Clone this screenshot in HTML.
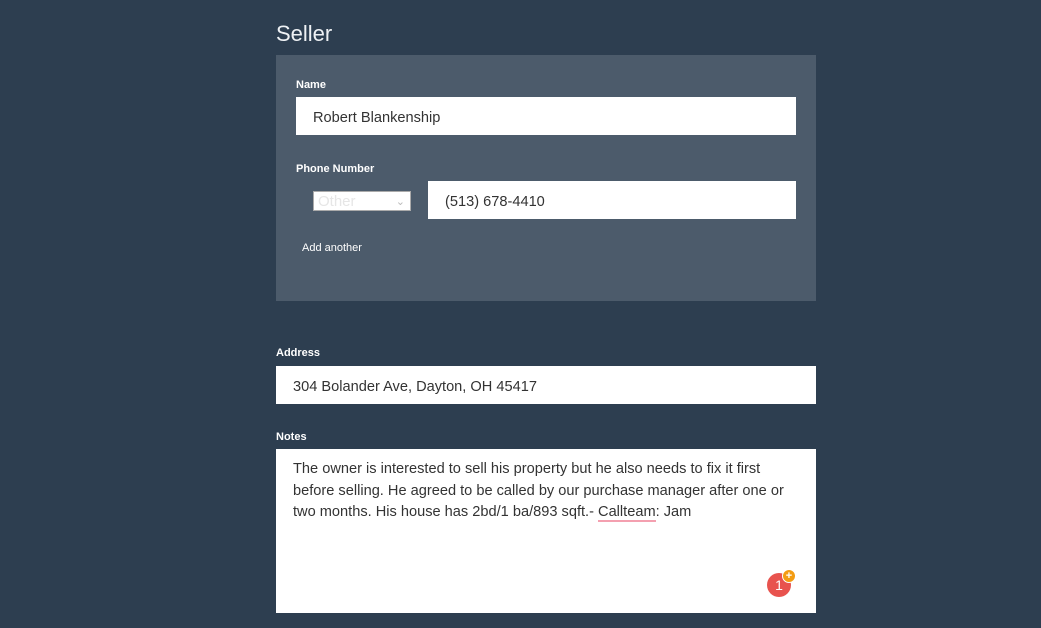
<!DOCTYPE html>
<html><head><style>
body{margin:0;width:1041px;height:628px;background:#2d3e50;font-family:"Liberation Sans",sans-serif;position:relative;overflow:hidden}
.a{position:absolute}
.lbl{font-size:11px;font-weight:bold;color:#fff}
.inp{background:#fff;color:#333;font-size:14.6px;box-sizing:border-box;padding-left:17px;padding-top:3px;display:flex;align-items:center}
</style></head><body>
<div class="a" style="left:276px;top:21px;font-size:22px;color:#eef1f4">Seller</div>
<div class="a" style="left:276px;top:55px;width:540px;height:246px;background:#4c5b6b"></div>
<div class="a lbl" style="left:296px;top:79px">Name</div>
<div class="a inp" style="left:296px;top:97px;width:500px;height:38px">Robert Blankenship</div>
<div class="a lbl" style="left:296px;top:163px">Phone Number</div>
<div class="a" style="left:313px;top:191px;width:98px;height:20px;background:#fff;border:1px solid #aaa;box-sizing:border-box;color:#e6e6e6;font-size:15px;padding-left:4px;line-height:20px">Other<span style="position:absolute;right:5px;top:0;color:#bbb;font-size:11px">&#8964;</span></div>
<div class="a inp" style="left:428px;top:181px;width:368px;height:38px">(513) 678-4410</div>
<div class="a" style="left:302px;top:242px;font-size:11px;color:#fff">Add another</div>
<div class="a lbl" style="left:276px;top:347px">Address</div>
<div class="a inp" style="left:276px;top:366px;width:540px;height:38px">304 Bolander Ave, Dayton, OH 45417</div>
<div class="a lbl" style="left:276px;top:431px">Notes</div>
<div class="a" style="left:276px;top:449px;width:540px;height:164px;background:#fff;color:#333;font-size:14.6px;line-height:21.5px;box-sizing:border-box;padding:10px 17px">The owner is interested to sell his property but he also needs to fix it first before selling. He agreed to be called by our purchase manager after one or two months. His house has 2bd/1 ba/893 sqft.- <span style="border-bottom:2px solid #f4a0b0">Callteam</span>: Jam</div>
<div class="a" style="left:767px;top:573px;width:24px;height:24px;border-radius:50%;background:#e8534e;color:#fff;font-size:14px;text-align:center;line-height:24px">1</div>
<div class="a" style="left:782px;top:569px;width:12px;height:12px;border-radius:50%;background:#f39c12;border:1px solid #fff;color:#fff;font-size:11px;font-weight:bold;text-align:center;line-height:12px">+</div>
</body></html>
